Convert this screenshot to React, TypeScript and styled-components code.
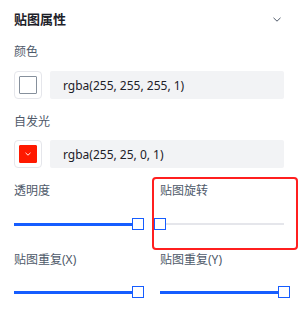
import React from "react";
import styled, { createGlobalStyle } from "styled-components";

const Global = createGlobalStyle`
  html, body { margin: 0; padding: 0; background: #ffffff; }
  body { font-family: "Noto Sans", "Noto Sans CJK SC", sans-serif; }
`;

const Page = styled.div`
  position: relative;
  width: 303px;
  height: 336px;
  display: flex;
  overflow: hidden;
  background: #ffffff;
`;

const Panel = styled.div`
  flex: 1;
  display: flex;
  flex-direction: column;
  padding-left: 14px;
`;

const Scrollbar = styled.div`
  width: 4px;
  height: 100%;
  background: #f6f6f6;
  border-left: 1px solid #ebebeb;
`;

const Header = styled.div`
  height: 38px;
  display: flex;
  align-items: center;
  justify-content: space-between;
  padding-right: 25px;
`;

const Title = styled.div`
  font-size: 13px;
  font-weight: 600;
  color: #1d2129;
  line-height: 20px;
`;

const Label = styled.div<{ $top: number }>`
  margin-top: ${(p) => p.$top}px;
  font-size: 12px;
  line-height: 20px;
  height: 20px;
  color: #4e5969;
`;

const ColorRow = styled.div<{ $top: number }>`
  margin-top: ${(p) => p.$top}px;
  display: flex;
  gap: 8px;
  height: 28px;
`;

const Swatch = styled.div`
  width: 26px;
  height: 26px;
  border: 1px solid #e5e6eb;
  border-radius: 4px;
  background: #ffffff;
  display: flex;
  align-items: center;
  justify-content: center;
`;

const SwatchInner = styled.div<{ $color: string; $light: boolean }>`
  box-sizing: border-box;
  width: 18px;
  height: 18px;
  background: ${(p) => p.$color};
  border: 1px solid ${(p) => (p.$light ? "#86909c" : p.$color)};
  border-radius: 1px;
  display: flex;
  align-items: center;
  justify-content: center;
`;

const ValueBox = styled.div`
  width: 234px;
  height: 28px;
  background: #f2f3f5;
  border-radius: 2px;
  box-sizing: border-box;
  padding-left: 13px;
  display: flex;
  align-items: center;
  font-size: 12px;
  color: #1d2129;
`;

const Grid = styled.div<{ $top: number }>`
  margin-top: ${(p) => p.$top}px;
  display: grid;
  grid-template-columns: 146px 146px;
`;

const Field = styled.div`
  display: flex;
  flex-direction: column;
`;

const SliderWrap = styled.div<{ $top: number }>`
  position: relative;
  margin-top: ${(p) => p.$top}px;
  width: 124px;
  height: 12px;
`;

const Rail = styled.div`
  position: absolute;
  left: 0;
  right: 0;
  top: 5px;
  height: 2px;
  background: #e5e6eb;
`;

const Track = styled.div`
  position: absolute;
  left: 0;
  top: 4.5px;
  height: 3px;
  background: #165dff;
`;

const Handle = styled.div`
  position: absolute;
  top: 0;
  width: 12px;
  height: 12px;
  box-sizing: border-box;
  border: 1.5px solid #165dff;
  background: #ffffff;
  transform: translateX(-50%);
`;

const Highlight = styled.div`
  position: absolute;
  left: 152px;
  top: 177px;
  width: 146px;
  height: 73px;
  box-sizing: border-box;
  border: 2px solid #ff1f1f;
  border-radius: 4px;
  pointer-events: none;
`;

const Chevron = () => (
  <svg width="8" height="5" viewBox="0 0 8 5" fill="none">
    <path d="M0.5 0.8 L4 4.2 L7.5 0.8" stroke="#4e5969" strokeWidth="1" />
  </svg>
);

const SmallChevron = () => (
  <svg width="6" height="4" viewBox="0 0 6 4" fill="none">
    <path d="M0.5 0.8 L3 3.2 L5.5 0.8" stroke="#ffffff" strokeWidth="0.9" />
  </svg>
);

const Slider = ({ value, top }: { value: number; top: number }) => (
  <SliderWrap $top={top}>
    <Rail />
    <Track style={{ width: `${value}%` }} />
    <Handle style={{ left: `${value}%` }} />
  </SliderWrap>
);

export default function App() {
  return (
    <>
      <Global />
      <Page>
        <Panel>
          <Header>
            <Title>贴图属性</Title>
            <Chevron />
          </Header>
          <Label $top={4}>颜色</Label>
          <ColorRow $top={9}>
            <Swatch>
              <SwatchInner $color="#ffffff" $light />
            </Swatch>
            <ValueBox>rgba(255, 255, 255, 1)</ValueBox>
          </ColorRow>
          <Label $top={13}>自发光</Label>
          <ColorRow $top={8}>
            <Swatch>
              <SwatchInner $color="#ff1900" $light={false}>
                <SmallChevron />
              </SwatchInner>
            </Swatch>
            <ValueBox>rgba(255, 25, 0, 1)</ValueBox>
          </ColorRow>
          <Grid $top={13}>
            <Field>
              <Label $top={0}>透明度</Label>
              <Slider value={100} top={17} />
            </Field>
            <Field>
              <Label $top={0}>贴图旋转</Label>
              <Slider value={0} top={17} />
            </Field>
          </Grid>
          <Grid $top={20}>
            <Field>
              <Label $top={0}>贴图重复(X)</Label>
              <Slider value={100} top={16} />
            </Field>
            <Field>
              <Label $top={0}>贴图重复(Y)</Label>
              <Slider value={100} top={16} />
            </Field>
          </Grid>
        </Panel>
        <Scrollbar />
        <Highlight />
      </Page>
    </>
  );
}
